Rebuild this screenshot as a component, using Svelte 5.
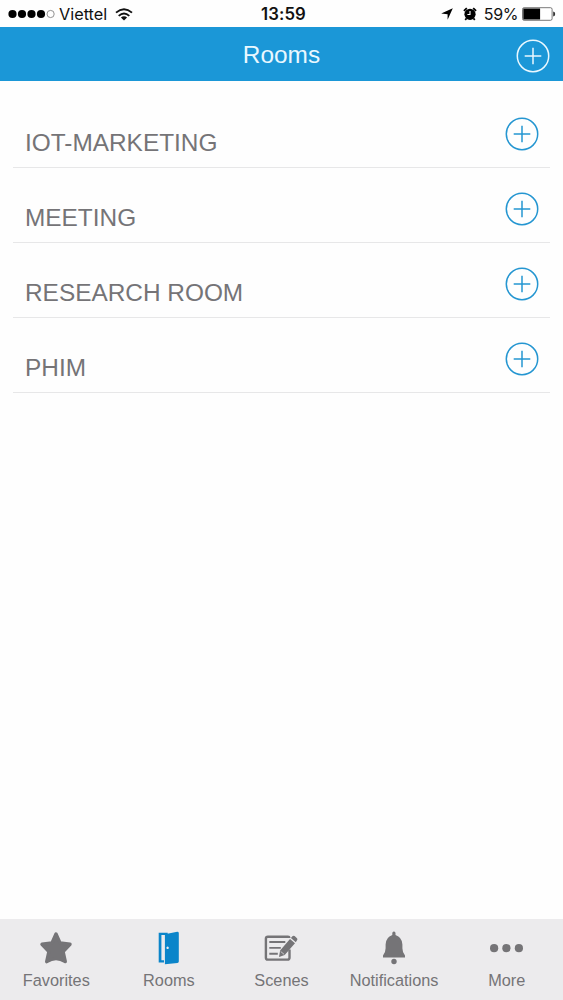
<script lang="ts">
	const rooms = ['IOT-MARKETING', 'MEETING', 'RESEARCH ROOM', 'PHIM'];
	const tabs = ['Favorites', 'Rooms', 'Scenes', 'Notifications', 'More'];

	let active = $state('Rooms');
</script>

{#snippet plus()}
	<svg class="plus" width="34" height="34" viewBox="0 0 34 34" fill="none" stroke="currentColor" stroke-width="1.5">
		<circle cx="17" cy="17" r="15.7" />
		<path d="M17 8.7v16.6M8.7 17h16.6" />
	</svg>
{/snippet}

<div class="screen">
	<div class="status">
		<div class="carrier">
			<svg width="47" height="10" viewBox="0 0 47 10">
				{#each [4.5, 14, 23.5, 33] as cx}
					<circle {cx} cy="5" r="4.1" />
				{/each}
				<circle cx="42.6" cy="5" r="3.6" fill="none" stroke="#777" stroke-width="0.8" />
			</svg>
			<span class="name">Viettel</span>
			<svg class="wifi" width="18" height="13" viewBox="0 0 18 13" fill="none" stroke="#111" stroke-width="1.9">
				<path d="M1 4.6Q9-2.2 17 4.6" />
				<path d="M3.7 7.9Q9 3.2 14.3 7.9" />
				<path d="M9 12.6L5.9 9.6Q9 7 12.1 9.6z" fill="#111" stroke="none" />
			</svg>
		</div>
		<strong>13:59</strong>
		<div class="indicators">
			<svg class="location" width="12" height="12" viewBox="0 0 12 12">
				<path d="M11.8.2L6.6 11.8V6.2L.2 5.5z" />
			</svg>
			<svg class="alarm" width="14" height="14" viewBox="0 0 14 14">
				<circle cx="7" cy="7.3" r="5.6" />
				<path d="M.9 3.9L3.8 1.2M13.1 3.9L10.2 1.2M3.4 11.5L2.2 12.9M10.6 11.5L11.8 12.9" stroke="#000" stroke-width="1.8" />
				<path d="M7 4v3.5H4.4" fill="none" stroke="#fff" stroke-width="1.1" />
			</svg>
			<span class="percent">59%</span>
			<svg width="34" height="14" viewBox="0 0 34 14">
				<rect x="0.5" y="0.7" width="29.6" height="12.6" rx="1.6" fill="#fff" stroke="#555" stroke-width="0.8" />
				<path d="M1.3 1.5h16.8v11H1.3z" />
				<path d="M31.2 4.5q2 .4 2 2.5t-2 2.5z" fill="#333" />
			</svg>
		</div>
	</div>

	<header>
		<h1>Rooms</h1>
		<button type="button" aria-label="Add room">{@render plus()}</button>
	</header>

	<main>
		{#each rooms as room}
			<div class="room">
				<span>{room}</span>
				<button type="button" aria-label="Add to {room}">{@render plus()}</button>
			</div>
		{/each}
	</main>

	<nav>
		{#each tabs as tab}
			<button type="button" class="tab" class:active={active === tab} onclick={() => (active = tab)}>
				<svg width="36" height="36" viewBox="0 0 36 36" fill="currentColor">
					{#if tab === 'Favorites'}
						<path
							d="M18 4L22 12.9L32 14.3L25.1 21.7L27.3 31.6Q22.5 28.5 18 28.5Q13.5 28.5 8.7 31.6L10.9 21.7L4 14.3L14 12.9z"
							stroke="currentColor"
							stroke-width="3.4"
							stroke-linejoin="round"
						/>
					{:else if tab === 'Rooms'}
						<path d="M7.7 2.8h9v2.1h-6.3v25.4H13v2.2H7.7z" />
						<path fill-rule="evenodd" d="M13.9 4.2L26.2 1.8q1.6-.1 1.6 1.4v28.3q0 1.3-1.4 1.5L13.9 34.3zM16.6 16.6a1.2 1.2 0 1 0 .01 0z" />
					{:else if tab === 'Scenes'}
						<path
							d="M26.3 8V7.6Q26.3 6.7 25 6.7H4.8Q2.9 6.7 2.9 8.6V27.7Q2.9 29.6 4.8 29.6H24.5Q26.5 29.6 26.5 27.7V19.5"
							fill="none"
							stroke="currentColor"
							stroke-width="2.4"
						/>
						<path d="M6.3 12h16M6.3 17.9h11.5M6.3 23.8h8.5" fill="none" stroke="currentColor" stroke-width="1.9" />
						<path d="M27 9L32 13.2L21.7 24.9L16 26.9L17.1 20.6zM27.9 8L29.4 6.2Q30.4 5.3 31.6 6.1L34 8.2Q34.9 9.2 34 10.3L32.8 12.2z" />
						<path d="M17.7 21.5L21.2 24.4" stroke="#ecebed" stroke-width="0.7" />
					{:else if tab === 'Notifications'}
						<path d="M16.3 2.8Q18 .2 19.5 2.8V5Q26.1 7.2 26.4 14.4V18.2Q26.4 22.4 29 25.6V27.5H7V25.6Q9.6 22.4 9.6 18.2V14.4Q9.9 7.2 16.3 5z" />
						<circle cx="18" cy="31.5" r="2.7" />
					{:else}
						<circle cx="5.1" cy="18.2" r="4.1" />
						<circle cx="17.4" cy="18.2" r="4.1" />
						<circle cx="29.9" cy="18.2" r="4.1" />
					{/if}
				</svg>
				<span>{tab}</span>
			</button>
		{/each}
	</nav>
</div>

<style>
	:global(body) {
		background: #fefefe;
	}

	.screen {
		display: flex;
		flex-direction: column;
		height: 100vh;
		font-family: 'Liberation Sans', Arial, sans-serif;
		color: #757477;
	}

	button {
		display: flex;
		padding: 0;
		border: 0;
		background: none;
		color: #2596d1;
		font: inherit;
	}

	svg {
		display: block;
		flex: none;
	}

	.status {
		display: grid;
		grid-template-columns: 1fr auto 1fr;
		align-items: center;
		box-sizing: border-box;
		height: 27px;
		padding: 1px 7px 0 8px;
		color: #111;
		font: 16.3px/20px Inter, sans-serif;
	}

	.status strong {
		padding-left: 3px;
		font-weight: 600;
		font-size: 16.8px;
		letter-spacing: 0.1px;
	}

	.carrier,
	.indicators {
		display: flex;
		align-items: center;
	}

	.name {
		margin-left: 4px;
	}

	.wifi {
		margin-left: 8px;
	}

	.indicators {
		justify-content: flex-end;
	}

	.location {
		margin-right: 10px;
	}

	.alarm {
		margin-right: 7px;
	}

	.percent {
		margin-right: 4px;
		font-size: 16px;
		letter-spacing: -0.4px;
	}

	header {
		display: grid;
		grid-template-columns: 1fr auto 1fr;
		align-items: center;
		height: 54px;
		background: #1b97d7;
	}

	header h1 {
		grid-column: 2;
		margin: 1px 0 0;
		color: #e9f8ff;
		font-size: 24.4px;
		font-weight: 400;
		line-height: 28px;
	}

	header button {
		justify-self: end;
		margin: 3px 13px 0 0;
		color: #e9f8ff;
	}

	main {
		flex: 1;
		padding: 12px 13px 0;
	}

	.room {
		display: flex;
		justify-content: space-between;
		box-sizing: border-box;
		height: 74.9px;
		padding: 24px 11px 0 12px;
		border-bottom: 1px solid #e7e7e8;
	}

	.room span {
		padding-top: 12px;
		font-size: 24.4px;
		line-height: 28px;
	}

	.room button {
		align-self: flex-start;
	}

	nav {
		display: grid;
		grid-template-columns: repeat(5, 1fr);
		height: 81px;
		background: #ecebed;
	}

	.tab {
		flex-direction: column;
		align-items: center;
		padding-top: 11px;
		color: #757477;
		font-size: 16.3px;
		line-height: 20px;
	}

	.tab span {
		margin-top: 4px;
	}

	.tab.active svg {
		color: #0b85ca;
	}
</style>
